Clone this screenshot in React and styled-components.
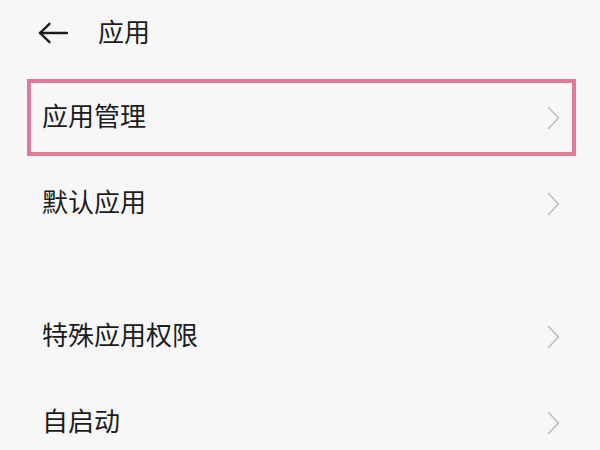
import styled, { createGlobalStyle } from "styled-components";

const GlobalStyle = createGlobalStyle`
  html, body {
    margin: 0;
    padding: 0;
    background: #f7f7f7;
  }
  body {
    font-family: "Noto Sans CJK SC", "Noto Sans", sans-serif;
    color: #1c1c1c;
  }
`;

function BackArrow() {
  return (
    <svg width='31' height='22' viewBox='0 0 31 22' fill='none'>
      <path d='M3 11H30' stroke='#1c1c1c' strokeWidth='2.4' strokeLinecap='round' />
      <path d='M12.5 1.8L3 11L12.5 20.2' stroke='#1c1c1c' strokeWidth='2.4' strokeLinecap='round' strokeLinejoin='round' />
    </svg>
  );
}

function Chevron() {
  return (
    <svg width='13' height='24' viewBox='0 0 13 24' fill='none'>
      <path d='M1.5 1.5L11.5 12L1.5 22.5' stroke='#bcbcbc' strokeWidth='1.6' strokeLinecap='round' strokeLinejoin='round' />
    </svg>
  );
}

export default function App() {
  const sections = [
    ["应用管理", "默认应用"],
    ["特殊应用权限", "自启动"],
  ];

  return (
    <>
      <GlobalStyle />
      <Page>
        <Header>
          <BackArrow />
          <Title>应用</Title>
        </Header>
        {sections.map((items, si) => (
          <Section key={si}>
            {items.map((name, i) => {
              const highlight = si === 0 && i === 0;
              return (
                <Row key={name} $highlight={highlight}>
                  <Label>{name}</Label>
                  <Chevron />
                </Row>
              );
            })}
          </Section>
        ))}
      </Page>
    </>
  );
}

const Page = styled.div`
  width: 600px;
  height: 450px;
  overflow: hidden;
`;

const Header = styled.header`
  height: 66px;
  padding-left: 37px;
  display: flex;
  align-items: center;
  gap: 30px;
`;

const Title = styled.h1`
  margin: 0;
  padding-bottom: 4px;
  font-size: 26px;
  font-weight: 400;
  line-height: 1;
`;

const Section = styled.section`
  padding: 0 24px 0 27px;
  display: flex;
  flex-direction: column;

  & + & {
    margin-top: 47px;
  }

  &:first-of-type {
    margin-top: 13px;
  }
`;

const Row = styled.div`
  box-sizing: border-box;
  display: flex;
  align-items: center;
  justify-content: space-between;
  height: ${({ $highlight }) => ($highlight ? "77px" : "86px")};
  border: ${({ $highlight }) => ($highlight ? "4px solid #e27a98" : "none")};
  padding-left: ${({ $highlight }) => ($highlight ? "11px" : "15px")};
  padding-right: ${({ $highlight }) => ($highlight ? "12px" : "16px")};
  margin-bottom: ${({ $highlight }) => ($highlight ? "5px" : "0")};
`;

const Label = styled.span`
  padding-bottom: 6px;
  font-size: 26px;
  line-height: 1;
`;
